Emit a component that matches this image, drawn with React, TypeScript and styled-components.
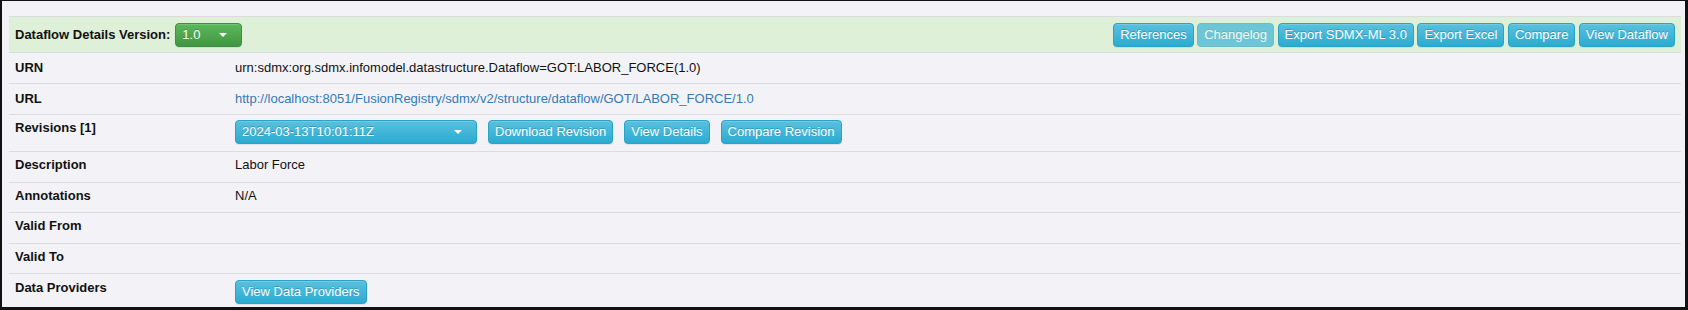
import React, { FC } from "react";
import styled, { createGlobalStyle, css } from "styled-components";

const GlobalStyle = createGlobalStyle`
  html, body {
    margin: 0;
    padding: 0;
  }

  body {
    font-family: "Liberation Sans", Arial, sans-serif;
    font-size: 13px;
    color: #222;
  }
`;

type Variant = "info" | "success";

const Frame = styled.div`
  box-sizing: border-box;
  width: 1688px;
  height: 310px;
  overflow: hidden;
  padding: 15px 4px 0 7px;
  background-color: #f3f3f7;
  border-style: solid;
  border-color: #111;
  border-width: 1px 3px 3px 2px;
`;

const DetailsTable = styled.div`
  display: flex;
  flex-direction: column;
  line-height: 18px;
`;

const HeaderRow = styled.div`
  display: flex;
  align-items: center;
  justify-content: space-between;
  padding: 6px 6px 5px;
  border-top: 1px solid #dcdcdc;
  background-color: #dff0d8;

  .header-title {
    display: flex;
    align-items: center;
    gap: 5px;
    font-weight: bold;
    color: #111;
  }

  .header-actions {
    display: flex;
    gap: 3.5px;
  }
`;

const Row = styled.div<{ $padTop: number; $padBottom: number }>`
  display: grid;
  grid-template-columns: 220px 1fr;
  border-top: 1px solid #dcdcdc;

  & > div {
    padding: ${({ $padTop }) => $padTop}px 6px
      ${({ $padBottom }) => $padBottom}px;
  }
`;

const LabelCell = styled.div`
  font-weight: bold;
  color: #111;
`;

const ValueCell = styled.div<{ $shift: number }>`
  display: flex;
  align-items: flex-start;
  gap: 11px;
  min-height: 18px;
  color: #111;

  && {
    padding-top: ${({ $shift }) => $shift}px;
  }
`;

const Link = styled.a`
  color: #337ab7;
  text-decoration: none;
`;

const variants = {
  info: css`
    background-color: #31b0d5;
    background-image: linear-gradient(to bottom, #5bc0de 0, #2aabd2 100%);
    border-color: #28a4c9;
  `,
  success: css`
    background-color: #449d44;
    background-image: linear-gradient(to bottom, #5cb85c 0, #419641 100%);
    border-color: #3e8f3e;
  `,
};

const Button = styled.button<{ $variant?: Variant }>`
  box-sizing: border-box;
  height: 24px;
  padding: 2px 6px;
  border: 1px solid;
  border-radius: 4px;
  font-family: inherit;
  font-size: 13px;
  line-height: 18px;
  color: #fff;
  white-space: nowrap;
  text-shadow: 0 -1px 0 rgba(0, 0, 0, 0.2);
  box-shadow: inset 0 1px 0 rgba(255, 255, 255, 0.15),
    0 1px 1px rgba(0, 0, 0, 0.075);
  cursor: pointer;
  ${({ $variant = "info" }) => variants[$variant]}

  &:disabled {
    background-image: none;
    background-color: #31b0d5;
    opacity: 0.65;
    box-shadow: none;
    cursor: not-allowed;
  }
`;

const Dropdown = styled(Button)<{ $width: number }>`
  display: flex;
  align-items: center;
  justify-content: space-between;
  width: ${({ $width }) => $width}px;
  padding: 2px 14px 2px 6px;
  text-align: left;

  .caret {
    width: 0;
    height: 0;
    border-top: 4px solid #fff;
    border-left: 4px solid transparent;
    border-right: 4px solid transparent;
  }
`;

const headerActions = [
  { title: "References" },
  { title: "Changelog", disabled: true },
  { title: "Export SDMX-ML 3.0" },
  { title: "Export Excel" },
  { title: "Compare" },
  { title: "View Dataflow" },
];

interface DetailRowProps {
  label: string;
  padTop?: number;
  padBottom?: number;
  valueTop?: number;
  children?: React.ReactNode;
}

const DetailRow: FC<DetailRowProps> = ({
  label,
  padTop = 4,
  padBottom = 7.5,
  valueTop,
  children,
}) => (
  <Row $padTop={padTop} $padBottom={padBottom}>
    <LabelCell>{label}</LabelCell>
    <ValueCell $shift={valueTop ?? padTop}>{children}</ValueCell>
  </Row>
);

export default function App() {
  return (
    <>
      <GlobalStyle />
      <Frame>
        <DetailsTable>
          <HeaderRow>
            <div className="header-title">
              Dataflow Details Version:
              <Dropdown $variant="success" $width={67}>
                1.0
                <span className="caret" />
              </Dropdown>
            </div>

            <div className="header-actions">
              {headerActions.map((action) => (
                <Button key={action.title} disabled={action.disabled}>
                  {action.title}
                </Button>
              ))}
            </div>
          </HeaderRow>

          <DetailRow label="URN" padTop={6} padBottom={6}>
            urn:sdmx:org.sdmx.infomodel.datastructure.Dataflow=GOT:LABOR_FORCE(1.0)
          </DetailRow>

          <DetailRow label="URL" padTop={6} padBottom={6}>
            <Link href="#">
              http://localhost:8051/FusionRegistry/sdmx/v2/structure/dataflow/GOT/LABOR_FORCE/1.0
            </Link>
          </DetailRow>

          <DetailRow label="Revisions [1]" valueTop={5} padBottom={7}>
            <Dropdown $width={242}>
              2024-03-13T10:01:11Z
              <span className="caret" />
            </Dropdown>
            <Button>Download Revision</Button>
            <Button>View Details</Button>
            <Button>Compare Revision</Button>
          </DetailRow>

          <DetailRow label="Description">Labor Force</DetailRow>
          <DetailRow label="Annotations">N/A</DetailRow>
          <DetailRow label="Valid From" />
          <DetailRow label="Valid To" />

          <DetailRow label="Data Providers" padTop={5} valueTop={6}>
            <Button>View Data Providers</Button>
          </DetailRow>
        </DetailsTable>
      </Frame>
    </>
  );
}
